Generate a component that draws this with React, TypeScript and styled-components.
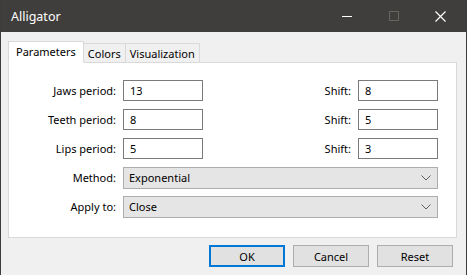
import React from "react";
import styled, { createGlobalStyle } from "styled-components";

const Global = createGlobalStyle`
  html, body { margin: 0; padding: 0; background: #f0f0f0; }
  body { font-family: "Noto Sans", "Open Sans", sans-serif; font-size: 11px; color: #000; }
`;

const Window = styled.div`
  width: 467px;
  height: 275px;
  box-sizing: border-box;
  background: #f0f0f0;
  border-left: 1px solid #3c3c3c;
  border-right: 1px solid #3c3c3c;
  display: flex;
  flex-direction: column;
  overflow: hidden;
`;

const TitleBar = styled.div`
  height: 32px;
  flex: none;
  background: #3f3e3c;
  display: flex;
  align-items: center;
  color: #fff;
  padding-right: 2px;
`;

const Title = styled.div`
  flex: 1;
  padding-left: 10px;
  font-size: 12.5px;
`;

const CaptionButton = styled.div`
  width: 47px;
  height: 32px;
  display: flex;
  align-items: center;
  justify-content: center;
`;

const Body = styled.div`
  flex: 1;
  padding: 8px 9px 0 7px;
  display: flex;
  flex-direction: column;
`;

const TabRow = styled.div`
  display: flex;
  align-items: flex-end;
  height: 22px;
  position: relative;
  z-index: 1;
`;

const Tab = styled.div<{ $active?: boolean }>`
  height: ${(p) => (p.$active ? "22px" : "19px")};
  box-sizing: border-box;
  padding: 0 ${(p) => (p.$active ? "7px" : "4px")};
  display: flex;
  align-items: center;
  background: ${(p) => (p.$active ? "#fff" : "#f0f0f0")};
  border: 1px solid #d9d9d9;
  border-bottom: ${(p) => (p.$active ? "1px solid #fff" : "none")};
  margin-left: ${(p) => (p.$active ? "0" : "-1px")};
  margin-bottom: ${(p) => (p.$active ? "-1px" : "0")};
  ${(p) => (p.$active ? "padding-bottom: 1px;" : "")}
`;

const Panel = styled.div`
  height: 176px;
  box-sizing: border-box;
  background: #fff;
  border: 1px solid #d9d9d9;
  padding: 17px 18px 0 0;
  display: flex;
  flex-direction: column;
  gap: 8px;
`;

const Row = styled.div`
  display: flex;
  align-items: center;
  height: 21px;
`;

const Label = styled.div<{ $w: number }>`
  width: ${(p) => p.$w}px;
  text-align: right;
  padding-right: 7px;
  box-sizing: border-box;
  flex: none;
`;

const Spacer = styled.div`
  flex: 1;
`;

const TextBox = styled.div`
  width: 80px;
  height: 21px;
  box-sizing: border-box;
  border: 1px solid #7a7a7a;
  background: #fff;
  padding-left: 6px;
  display: flex;
  align-items: center;
  flex: none;
`;

const Select = styled.div`
  flex: 1;
  height: 22px;
  box-sizing: border-box;
  border: 1px solid #adadad;
  background: #e5e5e5;
  padding: 0 6px 0 5px;
  display: flex;
  align-items: center;
  justify-content: space-between;
`;

const ButtonRow = styled.div`
  display: flex;
  justify-content: flex-end;
  gap: 8px;
  padding-top: 7px;
  padding-right: 4px;
`;

const Button = styled.div<{ $default?: boolean }>`
  width: 76px;
  height: 22px;
  box-sizing: border-box;
  border: ${(p) => (p.$default ? "2px solid #0078d7" : "1px solid #adadad")};
  background: #e1e1e1;
  display: flex;
  align-items: center;
  justify-content: center;
`;

const Chevron = () => (
  <svg width="10" height="6" viewBox="0 0 10 6">
    <path d="M0.5 0.5 L5 5 L9.5 0.5" fill="none" stroke="#606060" strokeWidth="1" />
  </svg>
);

const params = [
  { label: "Jaws period:", value: "13", shift: "8" },
  { label: "Teeth period:", value: "8", shift: "5" },
  { label: "Lips period:", value: "5", shift: "3" },
];

export default function App() {
  return (
    <>
      <Global />
      <Window>
        <TitleBar>
          <Title>Alligator</Title>
          <CaptionButton>
            <svg width="10" height="10" viewBox="0 0 10 10">
              <path d="M0 5.5 H10" stroke="#fff" strokeWidth="1" />
            </svg>
          </CaptionButton>
          <CaptionButton>
            <svg width="10" height="10" viewBox="0 0 10 10">
              <rect x="0.5" y="0.5" width="9" height="9" fill="none" stroke="#66655f" strokeWidth="1" />
            </svg>
          </CaptionButton>
          <CaptionButton>
            <svg width="11" height="11" viewBox="0 0 11 11">
              <path d="M0.5 0.5 L10.5 10.5 M10.5 0.5 L0.5 10.5" stroke="#fff" strokeWidth="1.2" />
            </svg>
          </CaptionButton>
        </TitleBar>
        <Body>
          <TabRow>
            <Tab $active>Parameters</Tab>
            <Tab>Colors</Tab>
            <Tab>Visualization</Tab>
          </TabRow>
          <Panel>
            {params.map((p) => (
              <Row key={p.label}>
                <Label $w={114}>{p.label}</Label>
                <TextBox>{p.value}</TextBox>
                <Spacer />
                <Label $w={60}>Shift:</Label>
                <TextBox>{p.shift}</TextBox>
              </Row>
            ))}
            <Row>
              <Label $w={114}>Method:</Label>
              <Select>
                Exponential
                <Chevron />
              </Select>
            </Row>
            <Row>
              <Label $w={114}>Apply to:</Label>
              <Select>
                Close
                <Chevron />
              </Select>
            </Row>
          </Panel>
          <ButtonRow>
            <Button $default>OK</Button>
            <Button>Cancel</Button>
            <Button>Reset</Button>
          </ButtonRow>
        </Body>
      </Window>
    </>
  );
}
